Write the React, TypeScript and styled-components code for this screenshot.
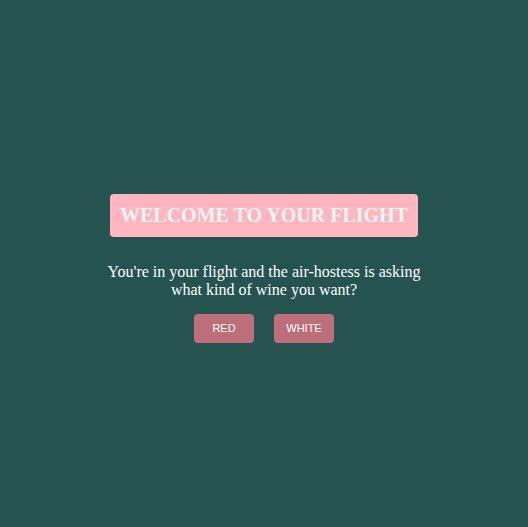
import React from 'react';
import styled, { createGlobalStyle } from 'styled-components';

const GlobalStyle = createGlobalStyle`
  html, body {
    margin: 0;
    padding: 0;
    background: #255350;
  }
`;

const Page = styled.main`
  min-height: 100vh;
  box-sizing: border-box;
  padding-top: 9px;
  display: flex;
  flex-direction: column;
  align-items: center;
  justify-content: center;
  font-family: 'Liberation Serif', 'Times New Roman', serif;
  color: #ffffff;
`;

const Title = styled.h1`
  margin: 0;
  padding: 9px 10px;
  background: #ffb6c1;
  color: #f5f5f5;
  border-radius: 4px;
  font-size: 20px;
  font-weight: bold;
  line-height: 25px;
`;

const Question = styled.p`
  margin: 26px 0 0;
  width: 320px;
  text-align: center;
  font-size: 16px;
  line-height: 18px;
`;

const Choices = styled.div`
  display: flex;
  gap: 20px;
  margin-top: 15px;
`;

const Choice = styled.button`
  width: 60px;
  height: 29px;
  border: none;
  border-radius: 4px;
  background: #bd6e79;
  color: #ffffff;
  font-family: 'Liberation Sans', Arial, sans-serif;
  font-size: 11px;
  cursor: pointer;
`;

export default function App() {
  return (
    <>
      <GlobalStyle />
      <Page>
        <Title>WELCOME TO YOUR FLIGHT</Title>
        <Question>You're in your flight and the air-hostess is asking what kind of wine you want?</Question>
        <Choices>
          <Choice type="button">RED</Choice>
          <Choice type="button">WHITE</Choice>
        </Choices>
      </Page>
    </>
  );
}
